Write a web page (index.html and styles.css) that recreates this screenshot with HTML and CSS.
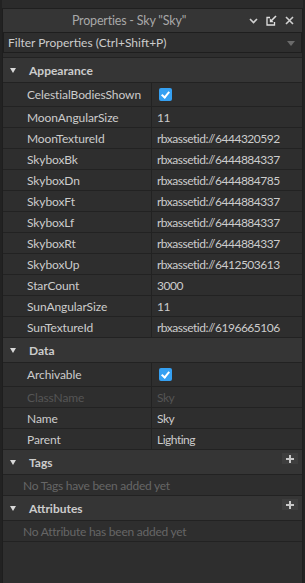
FILE: index.html
```html
<!DOCTYPE html>
<html>
<head>
<meta charset="utf-8">
<link rel="stylesheet" href="styles.css">
</head>
<body>
<div class="topstrip"></div>
<div class="panel">
  <div class="titlebar">
    <span class="title">Properties - Sky "Sky"</span>
    <div class="tb-icons">
      <svg width="9" height="8" viewBox="0 0 9 8"><path d="M1 2 L4.5 5.5 L8 2" fill="none" stroke="#d0d0d0" stroke-width="1.6"/></svg>
      <svg width="11" height="11" viewBox="0 0 11 11"><path d="M4 2.5 H1 V10 H8.5 V7" fill="none" stroke="#e0e0e0" stroke-width="1.3"/><path d="M10 1 L5 6" stroke="#e0e0e0" stroke-width="1.6"/><path d="M3.8 3.3 V7.2 H7.7 Z" fill="#e0e0e0"/></svg>
      <svg width="9" height="9" viewBox="0 0 9 9"><path d="M1 1 L8 8 M8 1 L1 8" stroke="#d0d0d0" stroke-width="1.6"/></svg>
    </div>
  </div>
  <div class="filter">
    <span>Filter Properties (Ctrl+Shift+P)</span>
    <svg width="8" height="5" viewBox="0 0 8 5"><path d="M0 0 H8 L4 5 Z" fill="#6a6a6a"/></svg>
  </div>
  <div class="list">
    <div class="section"><span class="tri"></span><span class="sname">Appearance</span></div>
    <div class="row tall"><span class="k">CelestialBodiesShown</span><span class="v"><span class="cb"></span></span></div>
    <div class="row"><span class="k">MoonAngularSize</span><span class="v">11</span></div>
    <div class="row"><span class="k">MoonTextureId</span><span class="v">rbxassetid://6444320592</span></div>
    <div class="row"><span class="k">SkyboxBk</span><span class="v">rbxassetid://6444884337</span></div>
    <div class="row"><span class="k">SkyboxDn</span><span class="v">rbxassetid://6444884785</span></div>
    <div class="row"><span class="k">SkyboxFt</span><span class="v">rbxassetid://6444884337</span></div>
    <div class="row"><span class="k">SkyboxLf</span><span class="v">rbxassetid://6444884337</span></div>
    <div class="row"><span class="k">SkyboxRt</span><span class="v">rbxassetid://6444884337</span></div>
    <div class="row"><span class="k">SkyboxUp</span><span class="v">rbxassetid://6412503613</span></div>
    <div class="row"><span class="k">StarCount</span><span class="v">3000</span></div>
    <div class="row"><span class="k">SunAngularSize</span><span class="v">11</span></div>
    <div class="row"><span class="k">SunTextureId</span><span class="v">rbxassetid://6196665106</span></div>
    <div class="section"><span class="tri"></span><span class="sname">Data</span></div>
    <div class="row tall"><span class="k">Archivable</span><span class="v"><span class="cb"></span></span></div>
    <div class="row dis"><span class="k">ClassName</span><span class="v">Sky</span></div>
    <div class="row"><span class="k">Name</span><span class="v">Sky</span></div>
    <div class="row"><span class="k">Parent</span><span class="v">Lighting</span></div>
    <div class="section"><span class="tri"></span><span class="sname">Tags</span><span class="plus"></span></div>
    <div class="empty">No Tags have been added yet</div>
    <div class="section"><span class="tri"></span><span class="sname">Attributes</span><span class="plus"></span></div>
    <div class="empty">No Attribute has been added yet</div>
  </div>
</div>
</body>
</html>
```
FILE: styles.css
```css
* { box-sizing: border-box; }
html, body { margin: 0; padding: 0; }
body {
  width: 305px;
  height: 583px;
  background: #2a2a2a;
  font-family: "Lato", "Noto Sans", sans-serif;
  font-size: 12px;
  color: #cccccc;
  overflow: hidden;
  border-left: 2px solid #222222;
  border-right: 2px solid #222222;
}
.topstrip {
  height: 9px;
  background: #2b2b2b;
  border-bottom: 1px solid #1f1f1f;
}
.panel {
  display: flex;
  flex-direction: column;
  height: 574px;
  background: #2e2e2e;
  border-left: 1px solid #1e1e1e;
  border-right: 1px solid #1e1e1e;
}
.titlebar {
  height: 23px;
  background: #353535;
  display: flex;
  align-items: center;
}
.title {
  flex: 1;
  text-align: center;
  color: #a8a8a8;
  font-size: 12.5px;
  letter-spacing: -0.2px;
  padding-left: 6px;
}
.tb-icons {
  display: flex;
  align-items: center;
  gap: 8px;
  padding-right: 8px;
}
.filter {
  height: 21px;
  background: #2e2e2e;
  border: 1px solid #1e1e1e;
  display: flex;
  align-items: center;
  justify-content: space-between;
  padding: 0 6px 0 4px;
  color: #cccccc;
}
.filter svg { margin-top: 1px; }
.list {
  margin-top: 4px;
  border-top: 1px solid #222222;
  flex: 1;
}
.section {
  height: 25px;
  background: #353535;
  border-bottom: 1px solid #222222;
  display: flex;
  align-items: center;
  font-weight: bold;
  color: #cccccc;
}
.tri {
  width: 0;
  height: 0;
  margin-left: 7px;
  margin-right: 13px;
  border-left: 3.5px solid transparent;
  border-right: 3.5px solid transparent;
  border-top: 5px solid #d8d8d8;
}
.sname { flex: 1; }
.plus {
  width: 16px;
  height: 11px;
  background: #3e3e3e;
  margin-right: 4px;
  margin-top: -8px;
  position: relative;
}
.plus::before, .plus::after {
  content: "";
  position: absolute;
  background: #c8c8c8;
}
.plus::before { left: 4px; top: 5px; width: 8px; height: 2px; }
.plus::after { left: 7px; top: 2px; width: 2px; height: 8px; }
.row {
  height: 21px;
  border-bottom: 1px solid #222222;
  display: grid;
  grid-template-columns: 149px 1fr;
  align-items: stretch;
}
.row.tall { height: 24px; }
.k {
  padding-left: 24px;
  display: flex;
  align-items: center;
  border-right: 1px solid #222222;
  letter-spacing: -0.1px;
}
.v {
  padding-left: 5px;
  display: flex;
  align-items: center;
  letter-spacing: -0.5px;
}
.row.dis { color: #555555; }
.cb {
  width: 13px;
  height: 13px;
  border-radius: 2px;
  background: #35a0f2;
  position: relative;
  margin-left: 2px;
}
.cb::after {
  content: "";
  position: absolute;
  left: 4px;
  top: 2px;
  width: 3px;
  height: 6px;
  border-right: 2px solid #ffffff;
  border-bottom: 2px solid #ffffff;
  transform: rotate(40deg);
}
.empty {
  height: 21px;
  border-bottom: 1px solid #222222;
  padding-left: 20px;
  display: flex;
  align-items: center;
  color: #666666;
  letter-spacing: -0.25px;
}
```
